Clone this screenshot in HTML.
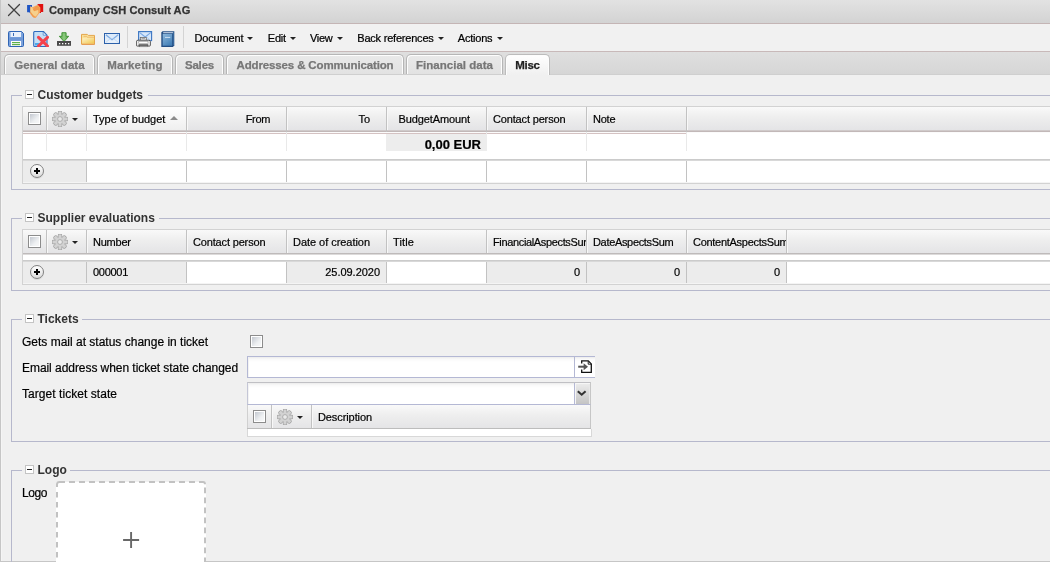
<!DOCTYPE html>
<html>
<head>
<meta charset="utf-8">
<title>Company CSH Consult AG</title>
<style>
html,body{margin:0;padding:0;}
body{width:1050px;height:562px;overflow:hidden;position:relative;background:#f0f0f0;font-family:"Liberation Sans",sans-serif;font-size:12px;color:#000;}
#wrap{position:absolute;left:0;top:0;width:1050px;height:562px;will-change:transform;}
.abs{position:absolute;}
.t{position:absolute;white-space:nowrap;line-height:14px;}
#titlebar{left:0;top:0;width:1050px;height:23px;background:linear-gradient(#e2e2e2,#d3d3d3);}
#titleline{left:0;top:23px;width:1050px;height:1px;background:#c4b5b5;}
#toolbar{left:0;top:24px;width:1050px;height:27px;background:#f1f1f1;}
#toolline{left:0;top:51px;width:1050px;height:1px;background:#c8b9b9;}
#leftedge{left:0;top:0;width:1px;height:562px;background:#c6c6c6;}
.title{left:49px;top:3px;font-weight:bold;font-size:11.1px;color:#333;}
.menu{top:31px;font-size:11px;color:#000;-webkit-text-stroke-width:0.22px;}
.caret{position:absolute;width:0;height:0;border-left:3px solid transparent;border-right:3px solid transparent;border-top:3px solid #222;}
.sep{position:absolute;top:26px;width:1px;height:22px;background:#d4d4d4;}
#tabstrip{left:1px;top:52px;width:1049px;height:22px;background:linear-gradient(#dfdfdf,#d6d6d6);}
#tabline{left:1px;top:74px;width:1049px;height:1px;background:#cfcfcf;}
.tab{position:absolute;top:54px;height:20px;border:1px solid #b6b6b6;border-bottom:none;border-radius:5px 5px 0 0;background:linear-gradient(#e9e9e9,#e2e2e2);box-shadow:inset 1px 1px 0 #fdfdfd, inset -1px 0 0 #fdfdfd;font-weight:bold;font-size:11.5px;color:#777;text-align:center;line-height:21px;box-sizing:border-box;white-space:nowrap;}
.tab.active{background:linear-gradient(#ffffff,#f0f0f0);color:#222;height:21px;border-color:#bcbcbc;z-index:2;}
.fs{position:absolute;border:1px solid #b6b8cc;border-right:none;box-sizing:border-box;}
.legend{position:absolute;font-weight:bold;font-size:12px;color:#333;white-space:nowrap;line-height:14px;}
.lgbg{position:absolute;background:#f0f0f0;height:3px;}
.tog{position:absolute;width:7px;height:7px;border:1px solid #c4c4c4;background:#fff;}
.tog:after{content:"";position:absolute;left:1px;top:3px;width:5px;height:1px;background:#222;}
.grid{position:absolute;background:#fff;border:1px solid #d2d2d2;border-right:none;box-sizing:border-box;}
.hdr{position:absolute;background:linear-gradient(#f9f9f9,#eeeeee 45%,#e4e4e6);overflow:hidden;}
.hc{position:absolute;top:0;height:100%;border-left:1px solid #c2c2c2;box-shadow:inset 1px 0 0 #f8f8f8;box-sizing:border-box;font-size:11px;line-height:24px;white-space:nowrap;overflow:hidden;padding:0 0 0 6px;}
.hc.r{text-align:right;padding-right:16px;}
.hc.sorted{background:linear-gradient(#ffffff,#f8f8f8 45%,#efefef);}
.cb{position:absolute;width:9px;height:9px;border:1px solid #8c8c8c;box-shadow:inset 0 0 0 1px #fff;background:linear-gradient(135deg,#bcc1ca,#eef0f2 60%,#fafafa);padding:1px;box-sizing:content-box;}
.cell{position:absolute;box-sizing:border-box;font-size:11px;white-space:nowrap;line-height:22px;}
.plus{position:absolute;width:12px;height:12px;border-radius:50%;border:1px solid #808080;background:linear-gradient(#ffffff,#dcdcdc);box-shadow:0 1px 0 #d8d8d8;}
.plus:before{content:"";position:absolute;left:3px;top:5px;width:6px;height:2px;background:#000;}
.plus:after{content:"";position:absolute;left:5px;top:3px;width:2px;height:6px;background:#000;}
.lbl{position:absolute;font-size:12px;line-height:14px;white-space:nowrap;}
.inp{position:absolute;box-sizing:border-box;border:1px solid #b4b8d4;background:linear-gradient(#ececec,#f9f9f9 2px,#fff 5px);box-shadow:inset 1px 0 0 #f3f3f3;}
.ln{position:absolute;}
.hc,.cell,.lbl{-webkit-text-stroke-width:0.2px;}
.tab,.title{-webkit-text-stroke-width:0.25px;}
</style>
</head>
<body>
<div id="wrap">
<div class="abs" id="titlebar"></div>
<div class="abs" id="titleline"></div>
<div class="abs" id="toolbar"></div>
<div class="abs" id="toolline"></div>
<svg class="abs" style="left:7px;top:3px" width="14" height="14" viewBox="0 0 14 14"><path d="M1.5 1.5L12.5 12.5M12.5 1.5L1.5 12.5" stroke="#404040" stroke-width="1.25" stroke-linecap="round" fill="none"/></svg>
<svg class="abs" style="left:27px;top:3px" width="17" height="16" viewBox="0 0 17 16">
<path d="M0.1 2h4.9v8.1h-2.4v-0.9h-2.5z" fill="#1f55c4"/>
<path d="M10.6 0.9h5.6v8.2h-2.2v0.9h-3.4z" fill="#e01010"/>
<path d="M3.2 3.2l2.3 1 3-1.4 2.6-0.8 2.2 2.6v4.4l-2.2 2.8-2.4 3.2-3-1.2-2.5-3.6z" fill="#f5a55a"/>
<path d="M3.6 3.6l1.6 0.8 1.2 2.4 2.6-1.6 2 1.4 0.4 3.4-2.6 3.6-2.2-1-1.4-1.8-1.8-2.2z" fill="#f6d08c"/>
<path d="M5.8 6.6L9.6 2.8l2.8 1.4 0.3 2.2-3.4 1.2-2 0.6z" fill="#f29a4a"/><path d="M3.4 8.8l2.4 3.2 2.8 2.8-2.2-0.2-3-3.6z" fill="#f29a4a"/>
</svg>
<div class="t title" style="letter-spacing:0.026px">Company CSH Consult AG</div>
<!-- save -->
<svg class="abs" style="left:8px;top:31px" width="16" height="16" viewBox="0 0 16 16">
<path d="M0.5 1.5a1 1 0 0 1 1-1h12l2 2v12a1 1 0 0 1-1 1h-13a1 1 0 0 1-1-1z" fill="#7ba2dc" stroke="#2f65b5"/>
<rect x="2.5" y="1" width="10.5" height="5" fill="#eaf1fb"/>
<rect x="5" y="2" width="1" height="3" fill="#3a6cb8"/>
<rect x="3" y="10" width="10" height="5" fill="#fdfdfd"/>
<rect x="4" y="11" width="8" height="1.2" fill="#5cb04a"/>
<rect x="4" y="13" width="8" height="1.2" fill="#5cb04a"/>
<rect x="1.5" y="6.5" width="13" height="3" fill="#6c96d6"/>
</svg>
<!-- delete doc -->
<svg class="abs" style="left:33px;top:31px" width="16" height="16" viewBox="0 0 16 16">
<path d="M0.7 1.5a1 1 0 0 1 1-1h8.8l3.5 3.6v10.4a1 1 0 0 1-1 1h-11.3a1 1 0 0 1-1-1z" fill="#c4def6" stroke="#2f6bbd" stroke-width="1.1"/>
<path d="M10.2 0.8v3.4h3.4z" fill="#f4f9ff" stroke="#2f6bbd" stroke-width="0.6"/>
<rect x="2" y="12" width="6" height="2.5" fill="#4aa8ea"/>
<path d="M5.5 6.3L14.5 15M14.5 6.3L5.5 15" stroke="#f5414b" stroke-width="3" stroke-linecap="round"/>
</svg>
<!-- download -->
<svg class="abs" style="left:57px;top:31px" width="15" height="16" viewBox="0 0 15 16">
<defs><linearGradient id="dg" x1="0" y1="0" x2="1" y2="0"><stop offset="0" stop-color="#4f9f42"/><stop offset="0.5" stop-color="#8ecb80"/><stop offset="1" stop-color="#4f9f42"/></linearGradient></defs>
<path d="M4.9 1.7h4.2v3.6h2.6L7 10.5 2.3 5.3h2.6z" fill="url(#dg)" stroke="#3a9030" stroke-width="0.9" stroke-linejoin="round"/>
<rect x="0" y="10" width="14" height="4.8" fill="#4a4a4a"/>
<rect x="2" y="12" width="1.3" height="1.3" fill="#fff"/><rect x="5" y="12" width="1.3" height="1.3" fill="#fff"/><rect x="8" y="12" width="1.3" height="1.3" fill="#fff"/><rect x="11" y="12" width="1.3" height="1.3" fill="#fff"/>
</svg>
<!-- folder -->
<svg class="abs" style="left:81px;top:33px" width="15" height="13" viewBox="0 0 15 13">
<defs><linearGradient id="fg" x1="0" y1="0" x2="0.8" y2="1"><stop offset="0" stop-color="#fef6d4"/><stop offset="1" stop-color="#f3cb58"/></linearGradient></defs>
<path d="M0.5 1.4h5.8l1 1h6.2v8.8h-13z" fill="#f9e09a" stroke="#e5a64c"/>
<path d="M1.5 5.2h3.8l1-1.1h6.7v6.4h-11.5z" fill="url(#fg)"/>
<path d="M2.5 3.4h3.6M6 4.3h7" stroke="#efba68" stroke-width="0.9"/>
<path d="M0.8 11.3h12.8" stroke="#e4914a" stroke-width="0.9"/>
</svg>
<!-- mail -->
<svg class="abs" style="left:104px;top:33px" width="16" height="11" viewBox="0 0 16 11">
<defs><linearGradient id="mg" x1="0" y1="0" x2="0" y2="1"><stop offset="0" stop-color="#cfe3f8"/><stop offset="1" stop-color="#eef5fd"/></linearGradient></defs>
<rect x="0.6" y="0.6" width="14.8" height="9.8" fill="url(#mg)" stroke="#2c61ab" stroke-width="1.2"/>
<rect x="1.6" y="1.6" width="12.8" height="7.8" fill="none" stroke="#f4f9ff" stroke-width="0.7"/>
<path d="M1.8 1.8l6.2 5 6.2-5z" fill="#dbeafb"/>
<path d="M1.8 1.8l6.2 5 6.2-5" fill="none" stroke="#7eabe2" stroke-width="1.1"/>
<path d="M2 9.2l4.4-3.6M14 9.2l-4.4-3.6" stroke="#b9d4f2" stroke-width="0.8"/>
</svg>
<div class="sep" style="left:127px"></div>
<!-- printer mail -->
<svg class="abs" style="left:136px;top:31px" width="17" height="17" viewBox="0 0 17 17">
<rect x="2.6" y="0.6" width="13" height="9" fill="#d6e7fa" stroke="#3a74c2" stroke-width="1.1"/>
<path d="M3.4 1.4l5.8 4.6 5.8-4.6" fill="none" stroke="#78a8e4" stroke-width="1.1"/>
<path d="M4 9.2l3.6-3M14.4 9.2l-3.6-3" stroke="#a9c8ee" stroke-width="0.8"/>
<rect x="4.3" y="6.4" width="6" height="3.2" fill="#f6f6f6" stroke="#6a6a6a" stroke-width="0.8"/>
<rect x="5.5" y="7.2" width="3.6" height="0.9" fill="#9a9a9a"/>
<path d="M2 9.2h10.8a1.6 1.6 0 0 1 1.6 1.6v3.4a0.9 0.9 0 0 1-0.9 0.9H1.3a0.9 0.9 0 0 1-0.9-0.9v-3.4a1.6 1.6 0 0 1 1.6-1.6z" fill="#ececec" stroke="#4c4c4c" stroke-width="0.9"/>
<rect x="2.8" y="10.6" width="9.2" height="2" fill="#fdfdfd" stroke="#8a8a8a" stroke-width="0.5"/>
<rect x="2.6" y="13.4" width="9.6" height="1.4" fill="#2e2e2e"/>
<rect x="3.2" y="14.6" width="8.4" height="1.2" fill="#d8d8d8" stroke="#555" stroke-width="0.5"/>
</svg>
<!-- book -->
<svg class="abs" style="left:161px;top:31px" width="14" height="17" viewBox="0 0 14 17">
<defs><linearGradient id="bg1" x1="0" y1="0" x2="0.6" y2="1"><stop offset="0" stop-color="#8fb9dc"/><stop offset="1" stop-color="#4581b8"/></linearGradient></defs>
<path d="M0.3 1.4l1.2-1.2h11.8v14.4l-1.4 1.4h-11.6z" fill="#234e84"/>
<rect x="1.7" y="2.9" width="9.5" height="11.8" fill="url(#bg1)"/>
<path d="M2.2 1.7h10" stroke="#e6eef8" stroke-width="0.9"/>
<path d="M12.4 1.2v13.2" stroke="#3d72a8" stroke-width="0.8"/>
<rect x="4" y="5.9" width="5.2" height="1" fill="#cfe1f2"/>
</svg>
<div class="sep" style="left:183px"></div>
<div class="t menu" style="letter-spacing:-0.143px;left:194.4px">Document</div>
<div class="caret" style="left:246.5px;top:37px"></div>
<div class="t menu" style="letter-spacing:-0.242px;left:267.8px">Edit</div>
<div class="caret" style="left:290px;top:37px"></div>
<div class="t menu" style="letter-spacing:-0.314px;left:310px">View</div>
<div class="caret" style="left:336.5px;top:37px"></div>
<div class="t menu" style="letter-spacing:-0.212px;left:357.3px">Back references</div>
<div class="caret" style="left:437.5px;top:37px"></div>
<div class="t menu" style="letter-spacing:-0.211px;left:457.8px">Actions</div>
<div class="caret" style="left:496.5px;top:37px"></div>
<div class="abs" id="tabstrip"></div>
<div class="abs" id="tabline"></div>
<div class="tab" style="left:4px;width:91px"><span style="letter-spacing:0.061px">General data</span></div>
<div class="tab" style="left:97px;width:76px"><span style="letter-spacing:0.108px">Marketing</span></div>
<div class="tab" style="left:175px;width:49px"><span style="letter-spacing:-0.173px">Sales</span></div>
<div class="tab" style="left:226px;width:178px"><span style="letter-spacing:-0.136px">Addresses &amp; Communication</span></div>
<div class="tab" style="left:406px;width:97px"><span style="letter-spacing:0.022px">Financial data</span></div>
<div class="tab active" style="left:505px;width:45px"><span style="letter-spacing:-0.295px">Misc</span></div>
<div class="ln" style="left:0px;top:561px;width:1050px;height:1px;background:#c6c6c6"></div>
<div class="fs" style="left:11px;top:95px;width:1039px;height:95px"></div>
<div class="lgbg" style="left:22px;top:94px;width:126px"></div>
<div class="tog" style="left:25px;top:90px"></div>
<div class="legend" style="letter-spacing:-0.032px;left:37.5px;top:88px">Customer budgets</div>
<div class="grid" style="left:22px;top:106px;width:1028px;height:78px"></div>
<div class="hdr" style="left:23px;top:107px;width:1027px;height:23px"><div class="hc" style="left:23px;width:40px"></div><div class="hc sorted" style="left:63px;width:100px"><span style="letter-spacing:-0.034px">Type of budget</span></div><div class="hc r" style="left:163px;width:100px"><span style="letter-spacing:-0.343px">From</span></div><div class="hc r" style="left:263px;width:100px">To</div><div class="hc r" style="left:363px;width:100px"><span style="letter-spacing:-0.098px">BudgetAmount</span></div><div class="hc" style="left:463px;width:100px"><span style="letter-spacing:-0.158px">Contact person</span></div><div class="hc" style="left:563px;width:100px"><span style="letter-spacing:-0.237px">Note</span></div><div class="hc" style="left:663px;width:364px"></div></div>
<div class="ln" style="left:23px;top:130px;width:1027px;height:1px;background:#d0caca"></div>
<div class="ln" style="left:23px;top:131px;width:1027px;height:1px;background:#c2b8b8"></div>
<div class="ln" style="left:23px;top:132px;width:1027px;height:1px;background:#fbfbfb"></div>
<div class="ln" style="left:23px;top:133px;width:664px;height:1px;background:#d4c2c2"></div>
<div class="ln" style="left:46px;top:130px;width:1px;height:2px;background:#c2c2c2"></div>
<div class="ln" style="left:86px;top:130px;width:1px;height:2px;background:#c2c2c2"></div>
<div class="ln" style="left:186px;top:130px;width:1px;height:2px;background:#c2c2c2"></div>
<div class="ln" style="left:286px;top:130px;width:1px;height:2px;background:#c2c2c2"></div>
<div class="ln" style="left:386px;top:130px;width:1px;height:2px;background:#c2c2c2"></div>
<div class="ln" style="left:486px;top:130px;width:1px;height:2px;background:#c2c2c2"></div>
<div class="ln" style="left:586px;top:130px;width:1px;height:2px;background:#c2c2c2"></div>
<div class="ln" style="left:686px;top:130px;width:1px;height:2px;background:#c2c2c2"></div>
<div class="cb" style="left:28px;top:112px"></div>
<svg class="abs" style="left:52px;top:111px" width="16" height="16" viewBox="0 0 16 16"><g transform="translate(8 8)"><g fill="#a0a0a0" stroke="#a0a0a0" stroke-width="1.3"><rect x="-1.5" y="-7.5" width="3" height="4" rx="0.6" transform="rotate(0)"/><rect x="-1.5" y="-7.5" width="3" height="4" rx="0.6" transform="rotate(45)"/><rect x="-1.5" y="-7.5" width="3" height="4" rx="0.6" transform="rotate(90)"/><rect x="-1.5" y="-7.5" width="3" height="4" rx="0.6" transform="rotate(135)"/><rect x="-1.5" y="-7.5" width="3" height="4" rx="0.6" transform="rotate(180)"/><rect x="-1.5" y="-7.5" width="3" height="4" rx="0.6" transform="rotate(225)"/><rect x="-1.5" y="-7.5" width="3" height="4" rx="0.6" transform="rotate(270)"/><rect x="-1.5" y="-7.5" width="3" height="4" rx="0.6" transform="rotate(315)"/><circle r="4.6"/></g><g fill="#d2d2d2"><rect x="-1.5" y="-7.5" width="3" height="4" rx="0.6" transform="rotate(0)"/><rect x="-1.5" y="-7.5" width="3" height="4" rx="0.6" transform="rotate(45)"/><rect x="-1.5" y="-7.5" width="3" height="4" rx="0.6" transform="rotate(90)"/><rect x="-1.5" y="-7.5" width="3" height="4" rx="0.6" transform="rotate(135)"/><rect x="-1.5" y="-7.5" width="3" height="4" rx="0.6" transform="rotate(180)"/><rect x="-1.5" y="-7.5" width="3" height="4" rx="0.6" transform="rotate(225)"/><rect x="-1.5" y="-7.5" width="3" height="4" rx="0.6" transform="rotate(270)"/><rect x="-1.5" y="-7.5" width="3" height="4" rx="0.6" transform="rotate(315)"/><circle r="4.6"/></g><circle r="2.4" fill="#eaeaea" stroke="#a8a8a8" stroke-width="0.9"/></g></svg>
<div class="caret" style="left:72px;top:118px"></div>
<div class="abs" style="left:169.5px;top:116px;width:0;height:0;border-left:4px solid transparent;border-right:4px solid transparent;border-bottom:4px solid #8c8c8c"></div>
<div class="ln" style="left:46px;top:132px;width:1px;height:19px;background:#e9e9e9"></div>
<div class="ln" style="left:86px;top:132px;width:1px;height:19px;background:#e9e9e9"></div>
<div class="ln" style="left:186px;top:132px;width:1px;height:19px;background:#e9e9e9"></div>
<div class="ln" style="left:286px;top:132px;width:1px;height:19px;background:#e9e9e9"></div>
<div class="ln" style="left:486px;top:132px;width:1px;height:19px;background:#e9e9e9"></div>
<div class="ln" style="left:586px;top:132px;width:1px;height:19px;background:#e9e9e9"></div>
<div class="ln" style="left:686px;top:132px;width:1px;height:19px;background:#e9e9e9"></div>
<div class="cell" style="left:386px;top:134px;width:101px;height:17px;background:#ededed;text-align:right;padding-right:6px;font-weight:bold;font-size:13px;line-height:21px">0,00 EUR</div>
<div class="ln" style="left:23px;top:159px;width:1027px;height:1px;background:#cbcbcb"></div>
<div class="ln" style="left:23px;top:160px;width:1027px;height:1px;background:#d8d8d8"></div>
<div class="ln" style="left:23px;top:161px;width:63px;height:21px;background:#ececec"></div>
<div class="ln" style="left:86px;top:161px;width:1px;height:21px;background:#c2c2c2"></div>
<div class="ln" style="left:186px;top:161px;width:1px;height:21px;background:#c2c2c2"></div>
<div class="ln" style="left:286px;top:161px;width:1px;height:21px;background:#c2c2c2"></div>
<div class="ln" style="left:386px;top:161px;width:1px;height:21px;background:#c2c2c2"></div>
<div class="ln" style="left:486px;top:161px;width:1px;height:21px;background:#c2c2c2"></div>
<div class="ln" style="left:586px;top:161px;width:1px;height:21px;background:#c2c2c2"></div>
<div class="ln" style="left:686px;top:161px;width:1px;height:21px;background:#c2c2c2"></div>
<div class="ln" style="left:23px;top:182px;width:1027px;height:1px;background:#f4f4f4"></div>
<div class="plus" style="left:30px;top:164px"></div>
<div class="fs" style="left:11px;top:218px;width:1039px;height:73px"></div>
<div class="lgbg" style="left:22px;top:217px;width:137px"></div>
<div class="tog" style="left:25px;top:213px"></div>
<div class="legend" style="left:37.5px;top:211px">Supplier evaluations</div>
<div class="grid" style="left:22px;top:229px;width:1028px;height:56px"></div>
<div class="hdr" style="left:23px;top:230px;width:1027px;height:23px"><div class="hc" style="left:23px;width:40px"></div><div class="hc" style="left:63px;width:100px"><span style="letter-spacing:-0.237px">Number</span></div><div class="hc" style="left:163px;width:100px"><span style="letter-spacing:-0.158px">Contact person</span></div><div class="hc" style="left:263px;width:100px"><span style="letter-spacing:-0.041px">Date of creation</span></div><div class="hc" style="left:363px;width:100px"><span style="letter-spacing:0.125px">Title</span></div><div class="hc" style="left:463px;width:100px"><span style="letter-spacing:-0.352px">FinancialAspectsSum</span></div><div class="hc" style="left:563px;width:100px"><span style="letter-spacing:-0.327px">DateAspectsSum</span></div><div class="hc" style="left:663px;width:100px"><span style="letter-spacing:-0.281px">ContentAspectsSum</span></div><div class="hc" style="left:763px;width:264px"></div></div>
<div class="ln" style="left:23px;top:253px;width:1027px;height:1px;background:#bebaba"></div>
<div class="ln" style="left:23px;top:254px;width:1027px;height:1px;background:#dcdada"></div>
<div class="cb" style="left:28px;top:235px"></div>
<svg class="abs" style="left:52px;top:234px" width="16" height="16" viewBox="0 0 16 16"><g transform="translate(8 8)"><g fill="#a0a0a0" stroke="#a0a0a0" stroke-width="1.3"><rect x="-1.5" y="-7.5" width="3" height="4" rx="0.6" transform="rotate(0)"/><rect x="-1.5" y="-7.5" width="3" height="4" rx="0.6" transform="rotate(45)"/><rect x="-1.5" y="-7.5" width="3" height="4" rx="0.6" transform="rotate(90)"/><rect x="-1.5" y="-7.5" width="3" height="4" rx="0.6" transform="rotate(135)"/><rect x="-1.5" y="-7.5" width="3" height="4" rx="0.6" transform="rotate(180)"/><rect x="-1.5" y="-7.5" width="3" height="4" rx="0.6" transform="rotate(225)"/><rect x="-1.5" y="-7.5" width="3" height="4" rx="0.6" transform="rotate(270)"/><rect x="-1.5" y="-7.5" width="3" height="4" rx="0.6" transform="rotate(315)"/><circle r="4.6"/></g><g fill="#d2d2d2"><rect x="-1.5" y="-7.5" width="3" height="4" rx="0.6" transform="rotate(0)"/><rect x="-1.5" y="-7.5" width="3" height="4" rx="0.6" transform="rotate(45)"/><rect x="-1.5" y="-7.5" width="3" height="4" rx="0.6" transform="rotate(90)"/><rect x="-1.5" y="-7.5" width="3" height="4" rx="0.6" transform="rotate(135)"/><rect x="-1.5" y="-7.5" width="3" height="4" rx="0.6" transform="rotate(180)"/><rect x="-1.5" y="-7.5" width="3" height="4" rx="0.6" transform="rotate(225)"/><rect x="-1.5" y="-7.5" width="3" height="4" rx="0.6" transform="rotate(270)"/><rect x="-1.5" y="-7.5" width="3" height="4" rx="0.6" transform="rotate(315)"/><circle r="4.6"/></g><circle r="2.4" fill="#eaeaea" stroke="#a8a8a8" stroke-width="0.9"/></g></svg>
<div class="caret" style="left:72px;top:241px"></div>
<div class="ln" style="left:23px;top:260px;width:1027px;height:1px;background:#cbcbcb"></div>
<div class="ln" style="left:23px;top:261px;width:1027px;height:1px;background:#d8d8d8"></div>
<div class="ln" style="left:23px;top:262px;width:763px;height:21px;background:#ececec"></div>
<div class="ln" style="left:186px;top:262px;width:100px;height:21px;background:#fff"></div>
<div class="ln" style="left:386px;top:262px;width:100px;height:21px;background:#fff"></div>
<div class="ln" style="left:86px;top:262px;width:1px;height:21px;background:#c2c2c2"></div>
<div class="ln" style="left:186px;top:262px;width:1px;height:21px;background:#c2c2c2"></div>
<div class="ln" style="left:286px;top:262px;width:1px;height:21px;background:#c2c2c2"></div>
<div class="ln" style="left:386px;top:262px;width:1px;height:21px;background:#c2c2c2"></div>
<div class="ln" style="left:486px;top:262px;width:1px;height:21px;background:#c2c2c2"></div>
<div class="ln" style="left:586px;top:262px;width:1px;height:21px;background:#c2c2c2"></div>
<div class="ln" style="left:686px;top:262px;width:1px;height:21px;background:#c2c2c2"></div>
<div class="ln" style="left:786px;top:262px;width:1px;height:21px;background:#c2c2c2"></div>
<div class="ln" style="left:23px;top:283px;width:1027px;height:1px;background:#f4f4f4"></div>
<div class="plus" style="left:30px;top:265px"></div>
<div class="cell" style="letter-spacing:-0.286px;left:93px;top:262px;line-height:21px">000001</div>
<div class="cell" style="letter-spacing:-0.026px;left:286px;top:262px;width:94px;text-align:right;line-height:21px">25.09.2020</div>
<div class="cell" style="left:486px;top:262px;width:94px;text-align:right;line-height:21px">0</div>
<div class="cell" style="left:586px;top:262px;width:94px;text-align:right;line-height:21px">0</div>
<div class="cell" style="left:686px;top:262px;width:94px;text-align:right;line-height:21px">0</div>
<div class="fs" style="left:11px;top:319px;width:1039px;height:123px"></div>
<div class="lgbg" style="left:22px;top:318px;width:60px"></div>
<div class="tog" style="left:25px;top:314px"></div>
<div class="legend" style="left:37.5px;top:312px">Tickets</div>
<div class="lbl" style="left:22px;top:335px">Gets mail at status change in ticket</div>
<div class="lbl" style="letter-spacing:-0.054px;left:22px;top:361px">Email address when ticket state changed</div>
<div class="lbl" style="letter-spacing:0.050px;left:22px;top:387px">Target ticket state</div>
<div class="cb" style="left:250px;top:335px"></div>
<div class="inp" style="left:247px;top:356px;width:348px;height:22px;border-right:none"></div>
<div class="ln" style="left:574px;top:357px;width:1px;height:20px;background:#b4b8d4"></div>
<svg class="abs" style="left:577px;top:359px" width="16" height="15" viewBox="0 0 16 15"><path d="M4.7 4.6V1.9h6.6l3 3V13.3h-9.6V10.6" fill="#fff" stroke="#111" stroke-width="1.3"/><path d="M11.2 2.2V5.2h3" fill="none" stroke="#111" stroke-width="0.9"/><path d="M1.2 7.7h6" fill="none" stroke="#555" stroke-width="2"/><path d="M6.6 4.2L11 7.7 6.6 11.2z" fill="#555"/></svg>
<div class="inp" style="left:247px;top:382px;width:344px;height:23px;border-color:#c0c0c4 #c6c6c6 #b4b8d4 #c4c6d6"></div>
<div class="abs" style="left:574px;top:383px;width:16px;height:21px;background:linear-gradient(#ededed,#c4c4c4);border-left:1px solid #b4b8d4;box-shadow:inset 1px 1px 0 #f6f6f6,inset -1px 0 0 #e8e8e8;box-sizing:border-box"></div>
<svg class="abs" style="left:576px;top:389px" width="12" height="8" viewBox="0 0 12 8"><path d="M1.8 2.3L5.7 5.7 9.6 2.3" fill="none" stroke="#333" stroke-width="2.1"/></svg>
<div class="hdr" style="left:247px;top:405px;width:344px;height:23px"><div class="hc" style="left:24px;width:40px"></div><div class="hc" style="left:64px;width:280px"><span style="letter-spacing:-0.094px">Description</span></div></div>
<div class="ln" style="left:247px;top:405px;width:1px;height:24px;background:#d0d0d0"></div>
<div class="ln" style="left:590px;top:405px;width:1px;height:24px;background:#c6c6c6"></div>
<div class="ln" style="left:247px;top:428px;width:344px;height:1px;background:#bcbcbc"></div>
<div class="abs" style="left:247px;top:429px;width:345px;height:8px;background:#fff;border:1px solid #d8d8d8;border-top:none;box-sizing:border-box"></div>
<div class="cb" style="left:253px;top:410px"></div>
<svg class="abs" style="left:277px;top:409px" width="16" height="16" viewBox="0 0 16 16"><g transform="translate(8 8)"><g fill="#a0a0a0" stroke="#a0a0a0" stroke-width="1.3"><rect x="-1.5" y="-7.5" width="3" height="4" rx="0.6" transform="rotate(0)"/><rect x="-1.5" y="-7.5" width="3" height="4" rx="0.6" transform="rotate(45)"/><rect x="-1.5" y="-7.5" width="3" height="4" rx="0.6" transform="rotate(90)"/><rect x="-1.5" y="-7.5" width="3" height="4" rx="0.6" transform="rotate(135)"/><rect x="-1.5" y="-7.5" width="3" height="4" rx="0.6" transform="rotate(180)"/><rect x="-1.5" y="-7.5" width="3" height="4" rx="0.6" transform="rotate(225)"/><rect x="-1.5" y="-7.5" width="3" height="4" rx="0.6" transform="rotate(270)"/><rect x="-1.5" y="-7.5" width="3" height="4" rx="0.6" transform="rotate(315)"/><circle r="4.6"/></g><g fill="#d2d2d2"><rect x="-1.5" y="-7.5" width="3" height="4" rx="0.6" transform="rotate(0)"/><rect x="-1.5" y="-7.5" width="3" height="4" rx="0.6" transform="rotate(45)"/><rect x="-1.5" y="-7.5" width="3" height="4" rx="0.6" transform="rotate(90)"/><rect x="-1.5" y="-7.5" width="3" height="4" rx="0.6" transform="rotate(135)"/><rect x="-1.5" y="-7.5" width="3" height="4" rx="0.6" transform="rotate(180)"/><rect x="-1.5" y="-7.5" width="3" height="4" rx="0.6" transform="rotate(225)"/><rect x="-1.5" y="-7.5" width="3" height="4" rx="0.6" transform="rotate(270)"/><rect x="-1.5" y="-7.5" width="3" height="4" rx="0.6" transform="rotate(315)"/><circle r="4.6"/></g><circle r="2.4" fill="#eaeaea" stroke="#a8a8a8" stroke-width="0.9"/></g></svg>
<div class="caret" style="left:297px;top:416px"></div>
<div class="fs" style="left:11px;top:470px;width:1039px;height:100px"></div>
<div class="lgbg" style="left:22px;top:469px;width:48px"></div>
<div class="tog" style="left:25px;top:465px"></div>
<div class="legend" style="left:37.5px;top:463px">Logo</div>
<div class="lbl" style="letter-spacing:-0.451px;left:22px;top:486px">Logo</div>
<svg class="abs" style="left:56px;top:481px" width="150" height="81" viewBox="0 0 150 81"><path d="M1 1H149Q150 1 150 2V81H0V2Q0 1 1 1z" fill="#fff"/><path d="M1 6V3.4Q1 1 3.6 1H9M13 1H19M23 1H29M33 1H39M43 1H49M53 1H59M63 1H69M73 1H79M83 1H89M93 1H99M103 1H109M113 1H119M123 1H129M133 1H139M143 1H147Q149 1 149 3.2M1 11V16.6M1 21V26.6M1 31V36.6M1 41V46.6M1 51V56.6M1 61V66.6M1 71V76.6M1 81V81M149 6.5V12.3M149 16.5V22.3M149 26.5V32.3M149 36.5V42.3M149 46.5V52.3M149 56.5V62.3M149 66.5V72.3M149 76.5V81" fill="none" stroke="#c2c2c2" stroke-width="2"/><path d="M75.1 51v16M67.1 59h16" stroke="#686868" stroke-width="1.9" fill="none"/></svg>
<div class="abs" id="leftedge"></div><div class="abs" style="left:1px;top:75px;width:1px;height:486px;background:#f5f5f5"></div>
</div>
</body>
</html>
